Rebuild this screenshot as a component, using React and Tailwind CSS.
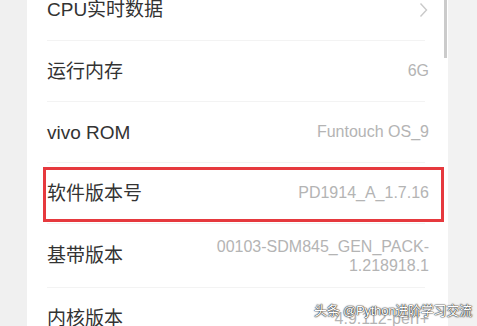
import React from "react";

const font = { fontFamily: '"Liberation Sans", "Noto Sans CJK SC", sans-serif' };

function Row({ label, children, className = "" }) {
  return (
    <div className={"flex items-center justify-between pl-[20px] pr-[19px] " + className}>
      <span className="text-[19px] leading-none text-[#333333]">{label}</span>
      {children}
    </div>
  );
}

function Divider() {
  return <div className="ml-[20px] mr-[23px] h-px bg-[#f3f3f3]" />;
}

function Value({ children }) {
  return <span className="text-[16px] leading-none text-[#b4b4b4] text-right">{children}</span>;
}

export default function App() {
  return (
    <div className="relative flex h-[326px] w-[477px] overflow-hidden bg-[#f1f1f1]" style={font}>
      <div className="w-[27px] shrink-0 bg-[#f0f0f0]" />
      <div className="relative w-[421px] shrink-0 bg-white">
        <div className="absolute right-[1px] top-0 h-[58px] w-[3px] bg-[#cbcbcb]" />
        <div className="mt-[-21px] flex flex-col">
          <Row label="CPU实时数据" className="h-[61px]">
            <svg width="9" height="16" viewBox="0 0 9 16" className="mr-[1px]">
              <polyline points="1.5,1.5 7.5,8 1.5,14.5" fill="none" stroke="#c9c9c9" strokeWidth="1.4" />
            </svg>
          </Row>
          <Divider />
          <Row label="运行内存" className="h-[60px]">
            <Value>6G</Value>
          </Row>
          <Divider />
          <Row label="vivo ROM" className="h-[60px]">
            <Value>Funtouch OS_9</Value>
          </Row>
          <Divider />
          <div className="relative">
            <Row label="软件版本号" className="h-[60px]">
              <Value>PD1914_A_1.7.16</Value>
            </Row>
            <div className="absolute left-[16px] right-[4px] top-[4px] bottom-[1px] border-[3px] border-[#e6393e]" />
          </div>
          <Divider />
          <Row label="基带版本" className="h-[63px]">
            <span className="text-[16px] leading-[19px] text-[#b4b4b4] text-right">
              00103-SDM845_GEN_PACK-
              <br />
              1.218918.1
            </span>
          </Row>
          <Divider />
          <Row label="内核版本" className="h-[61px]">
            <Value>4.9.112-perf+</Value>
          </Row>
        </div>
      </div>
      <div className="w-[29px] shrink-0 bg-[#f2f2f2]" />
      <div
        className="absolute right-[5px] top-[304px] whitespace-nowrap text-[13px] leading-none tracking-[-0.2px] text-white [text-shadow:0_0_1px_#222,0_0_1px_#222,0_0_2px_#555]"
        style={font}
      >
        头条 @Python进阶学习交流
      </div>
    </div>
  );
}
